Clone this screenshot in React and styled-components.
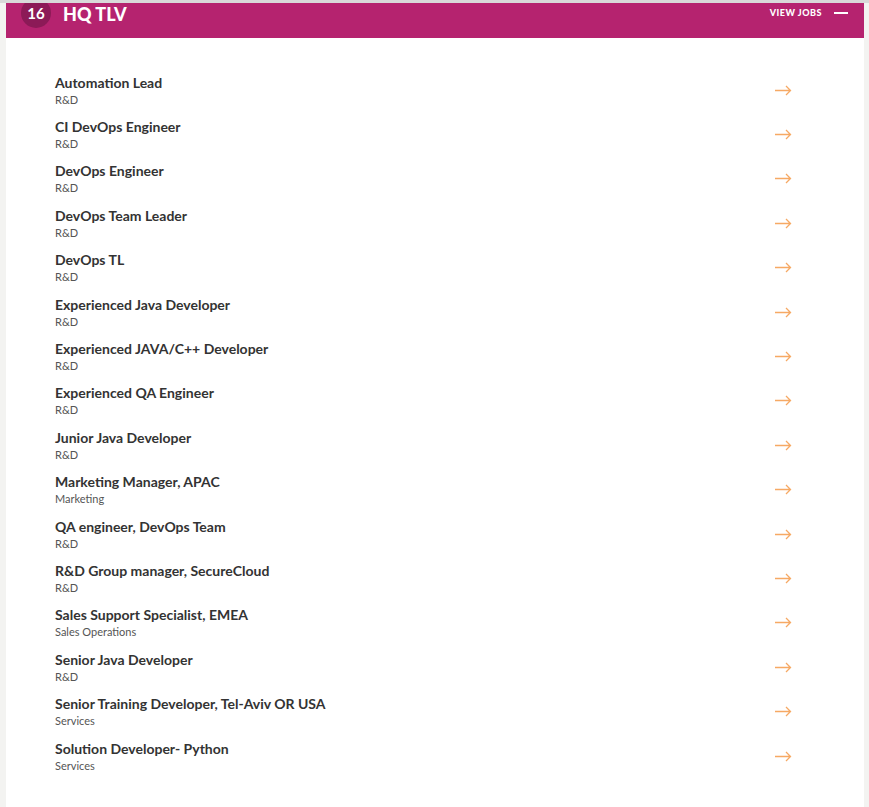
import React from "react";
import styled, { createGlobalStyle } from "styled-components";

const jobs = [
    ["Automation Lead", "R&D"],
    ["CI DevOps Engineer", "R&D"],
    ["DevOps Engineer", "R&D"],
    ["DevOps Team Leader", "R&D"],
    ["DevOps TL", "R&D"],
    ["Experienced Java Developer", "R&D"],
    ["Experienced JAVA/C++ Developer", "R&D"],
    ["Experienced QA Engineer", "R&D"],
    ["Junior Java Developer", "R&D"],
    ["Marketing Manager, APAC", "Marketing"],
    ["QA engineer, DevOps Team", "R&D"],
    ["R&D Group manager, SecureCloud", "R&D"],
    ["Sales Support Specialist, EMEA", "Sales Operations"],
    ["Senior Java Developer", "R&D"],
    ["Senior Training Developer, Tel-Aviv OR USA", "Services"],
    ["Solution Developer- Python", "Services"],
];

const GlobalStyle = createGlobalStyle`
    html, body {
        margin: 0;
        padding: 0;
        background: #f3f3f1;
        font-family: "Lato", "Noto Sans", sans-serif;
    }
`;

const Arrow = () => (
    <svg width="17" height="11" viewBox="0 0 17 11" fill="none">
        <path d="M0 5.5H15.5M11 1L15.5 5.5L11 10" stroke="#f6a964" strokeWidth="1.3" />
    </svg>
);

const App = () => {
    return (
        <>
            <GlobalStyle />
            <Page>
                <Section>
                    <Header>
                        <Count>16</Count>
                        <Title>HQ TLV</Title>
                        <Toggle>
                            View jobs
                            <Dash />
                        </Toggle>
                    </Header>
                    <List>
                        {jobs.map(([name, dept]) => (
                            <Row key={name} href="#">
                                <div>
                                    <JobName>{name}</JobName>
                                    <Dept>{dept}</Dept>
                                </div>
                                <Arrow />
                            </Row>
                        ))}
                    </List>
                </Section>
            </Page>
        </>
    );
};

const Page = styled.div`
    border-top: 3px solid #d9d9d9;
    padding: 0 5px 0 6px;
    min-height: 804px;
`;

const Section = styled.section`
    background: #fff;
    min-height: 804px;
`;

const Header = styled.div`
    height: 35px;
    background: #b5236f;
    display: flex;
    align-items: flex-start;
    overflow: hidden;
    padding: 0 16px 0 15px;
    color: #fff;
`;

const Count = styled.div`
    width: 30px;
    height: 30px;
    margin-top: -5px;
    border-radius: 50%;
    background: #8c1a57;
    display: flex;
    align-items: center;
    justify-content: center;
    font-weight: 700;
    font-size: 15px;
`;

const Title = styled.div`
    margin-left: 12px;
    font-weight: 900;
    font-size: 18px;
    line-height: 20px;
    margin-top: 1px;
`;

const Toggle = styled.div`
    margin-left: auto;
    display: flex;
    align-items: center;
    gap: 12px;
    font-size: 9px;
    font-weight: 900;
    text-transform: uppercase;
    letter-spacing: 0.5px;
    margin-top: 4px;
`;

const Dash = styled.span`
    width: 14px;
    height: 2px;
    background: #fff;
`;

const List = styled.div`
    padding: 30px 72px 30px 49px;
`;

const Row = styled.a`
    display: flex;
    align-items: center;
    justify-content: space-between;
    height: 44.4px;
    text-decoration: none;
`;

const JobName = styled.div`
    font-size: 14px;
    font-weight: 700;
    line-height: 17px;
    color: #333;
`;

const Dept = styled.div`
    font-size: 11px;
    line-height: 15px;
    margin-top: 1px;
    color: #555;
`;

export default App;
